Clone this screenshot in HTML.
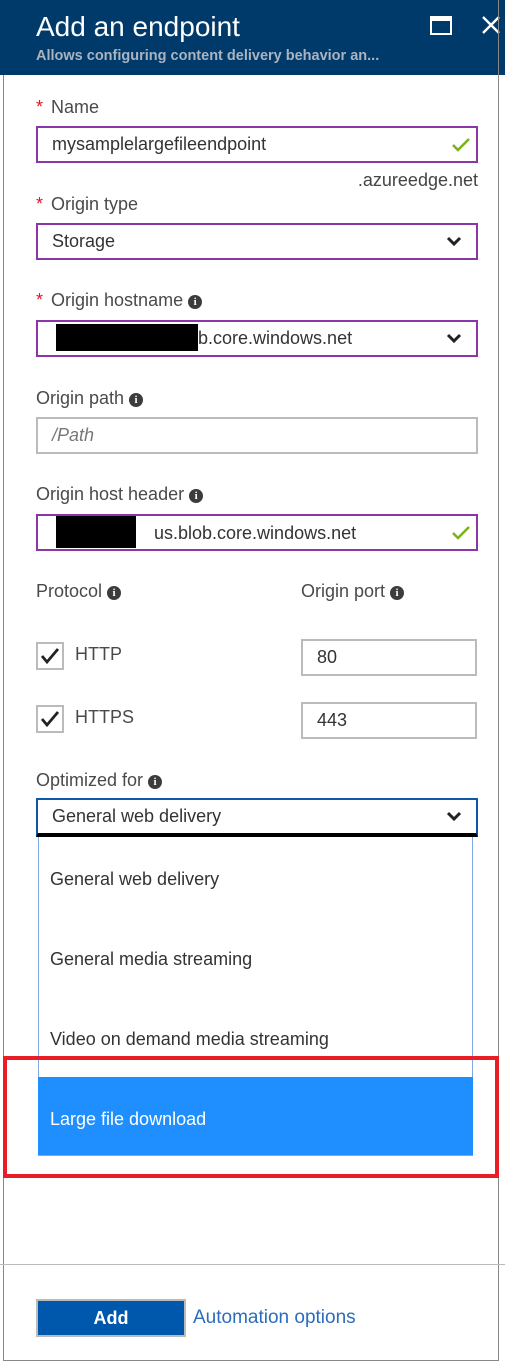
<!DOCTYPE html>
<html><head><meta charset="utf-8"><style>
*{margin:0;padding:0;box-sizing:border-box}
body{width:505px;height:1366px;background:#fff;position:relative;overflow:hidden;font-family:"Liberation Sans",sans-serif;color:#444}
.a{position:absolute}
.lbl{position:absolute;left:36px;font-size:18px;color:#4a4a4a;line-height:20px;white-space:nowrap}
.star{color:#e81123;margin-right:8px}
.inp{position:absolute;left:36px;width:442px;height:37px;border:2px solid #8a35a8;font-size:18px;color:#333;padding-left:14px;line-height:33px;white-space:nowrap}
.grey{border-color:#bbb}
.info{display:inline-block;width:14px;height:14px;border-radius:50%;background:#3c3c3c;color:#fff;font-size:11px;font-weight:bold;line-height:14px;text-align:center;vertical-align:1px;margin-left:5px;font-family:"Liberation Serif",serif}
.chev{position:absolute;right:14px;top:11px}
.chk{position:absolute;right:6px;top:10px}
.cb{position:absolute;left:36px;width:28px;height:28px;border:2px solid #bbb}
.item{position:absolute;left:50px;font-size:18px;color:#333;line-height:20px}
</style></head><body>
<div class="a" style="left:0;top:0;width:505px;height:75px;background:#003a6b"></div>
<div class="a" style="left:36px;top:10px;font-size:28px;color:#fff;line-height:34px">Add an endpoint</div>
<div class="a" style="left:36px;top:47px;font-size:14.5px;font-weight:bold;color:#aab4c0;line-height:18px">Allows configuring content delivery behavior an...</div>
<div class="a" style="left:430px;top:16px;width:22px;height:19px;border:2px solid #fff;border-top-width:5px"></div>
<svg class="a" style="left:481px;top:15px" width="20" height="20"><path d="M2 2L18 18M18 2L2 18" stroke="#fff" stroke-width="2.4"/></svg>
<div class="a" style="left:3px;top:75px;width:1px;height:1286px;background:#888"></div>
<div class="a" style="left:498px;top:0;width:1px;height:1361px;background:#888"></div>
<div class="a" style="left:3px;top:1360px;width:496px;height:1px;background:#888"></div>

<div class="lbl" style="top:97px"><span class="star">*</span>Name</div>
<div class="inp" style="top:126px">mysamplelargefileendpoint<svg class="chk" width="18" height="14"><path d="M1 7L6 12L17 1" stroke="#7ab317" stroke-width="2.5" fill="none"/></svg></div>
<div class="a" style="right:27px;top:170px;font-size:18px;color:#444;line-height:20px">.azureedge.net</div>

<div class="lbl" style="top:194px"><span class="star">*</span>Origin type</div>
<div class="inp" style="top:223px">Storage<svg class="chev" width="16" height="12"><path d="M2 2L8 8L14 2" stroke="#222" stroke-width="3" fill="none"/></svg></div>

<div class="lbl" style="top:290px"><span class="star">*</span>Origin hostname<span class="info">i</span></div>
<div class="inp" style="top:320px"><span style="display:inline-block;width:142px;height:27px;background:#000;vertical-align:-7px;margin-left:4px"></span>b.core.windows.net<svg class="chev" width="16" height="12"><path d="M2 2L8 8L14 2" stroke="#222" stroke-width="3" fill="none"/></svg></div>

<div class="lbl" style="top:388px">Origin path<span class="info">i</span></div>
<div class="inp grey" style="top:417px;font-style:italic;color:#777">/Path</div>

<div class="lbl" style="top:484px">Origin host header<span class="info">i</span></div>
<div class="inp" style="top:514px"><span style="display:inline-block;width:80px;height:32px;background:#000;vertical-align:-9px;margin-left:4px;margin-right:18px"></span>us.blob.core.windows.net<svg class="chk" width="18" height="14"><path d="M1 7L6 12L17 1" stroke="#7ab317" stroke-width="2.5" fill="none"/></svg></div>

<div class="lbl" style="top:581px">Protocol<span class="info">i</span></div>
<div class="lbl" style="top:581px;left:301px">Origin port<span class="info">i</span></div>

<div class="cb" style="top:642px"><svg width="24" height="24"><path d="M4 12L9 18L20 5" stroke="#222" stroke-width="2.8" fill="none"/></svg></div>
<div class="lbl" style="left:75px;top:644px">HTTP</div>
<div class="inp grey" style="left:301px;width:176px;top:639px">80</div>
<div class="cb" style="top:705px"><svg width="24" height="24"><path d="M4 12L9 18L20 5" stroke="#222" stroke-width="2.8" fill="none"/></svg></div>
<div class="lbl" style="left:75px;top:707px">HTTPS</div>
<div class="inp grey" style="left:301px;width:176px;top:702px">443</div>

<div class="lbl" style="top:770px">Optimized for<span class="info">i</span></div>
<div class="inp" style="top:798px;height:39px;border-color:#0f58a8;border-bottom:4px solid #000">General web delivery<svg class="chev" width="16" height="12"><path d="M2 2L8 8L14 2" stroke="#222" stroke-width="3" fill="none"/></svg></div>
<div class="a" style="left:38px;top:837px;width:435px;height:319px;border:1px solid #7ea9e4;border-top:none"></div>
<div class="item" style="top:869px">General web delivery</div>
<div class="item" style="top:949px">General media streaming</div>
<div class="item" style="top:1029px">Video on demand media streaming</div>
<div class="a" style="left:38px;top:1077px;width:435px;height:78px;background:#1f8fff"></div>
<div class="item" style="top:1109px;color:#fff">Large file download</div>
<div class="a" style="left:3px;top:1056px;width:496px;height:122px;border:4px solid #e81d25"></div>

<div class="a" style="left:0;top:1264px;width:505px;height:1px;background:#bbb"></div>
<div class="a" style="left:36px;top:1299px;width:150px;height:38px;background:#0058ad;border:2px solid #bbb;color:#fff;font-weight:bold;font-size:18px;text-align:center;line-height:34px">Add</div>
<div class="a" style="left:193px;top:1307px;font-size:19px;color:#2a6ebb;line-height:22px">Automation options</div>
</body></html>
